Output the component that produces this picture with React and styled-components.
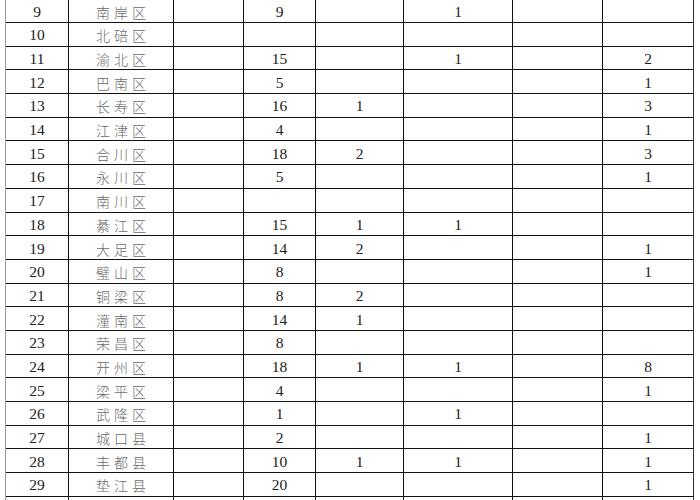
import React from "react";
import styled, { createGlobalStyle } from "styled-components";

const Global = createGlobalStyle`
  html, body { margin: 0; padding: 0; background: #fff; overflow: hidden; }
  body { width: 700px; height: 500px; }
`;

const COLS = [63, 105, 70, 72, 88, 109, 90, 91];

const rows = [
  ["9", "南岸区", "", "9", "", "1", "", ""],
  ["10", "北碚区", "", "", "", "", "", ""],
  ["11", "渝北区", "", "15", "", "1", "", "2"],
  ["12", "巴南区", "", "5", "", "", "", "1"],
  ["13", "长寿区", "", "16", "1", "", "", "3"],
  ["14", "江津区", "", "4", "", "", "", "1"],
  ["15", "合川区", "", "18", "2", "", "", "3"],
  ["16", "永川区", "", "5", "", "", "", "1"],
  ["17", "南川区", "", "", "", "", "", ""],
  ["18", "綦江区", "", "15", "1", "1", "", ""],
  ["19", "大足区", "", "14", "2", "", "", "1"],
  ["20", "璧山区", "", "8", "", "", "", "1"],
  ["21", "铜梁区", "", "8", "2", "", "", ""],
  ["22", "潼南区", "", "14", "1", "", "", ""],
  ["23", "荣昌区", "", "8", "", "", "", ""],
  ["24", "开州区", "", "18", "1", "1", "", "8"],
  ["25", "梁平区", "", "4", "", "", "", "1"],
  ["26", "武隆区", "", "1", "", "1", "", ""],
  ["27", "城口县", "", "2", "", "", "", "1"],
  ["28", "丰都县", "", "10", "1", "1", "", "1"],
  ["29", "垫江县", "", "20", "", "", "", "1"],
  ["", "", "", "", "", "", "", ""],
];

const Page = styled.div`
  padding-left: 5px;
  margin-top: -0.7px;
`;

const Grid = styled.div`
  display: grid;
  grid-template-columns: ${COLS.map((c) => c + "px").join(" ")};
  grid-auto-rows: 23.7px;
  border-left: 1px solid #9a9a9a;
  width: max-content;
`;

const Cell = styled.div`
  box-sizing: border-box;
  border-right: 1px solid ${(p) => (p.$last ? "#333" : "#111")};
  border-bottom: 1px solid #111;
  display: flex;
  align-items: center;
  justify-content: center;
  padding-top: 2px;
  white-space: nowrap;
  font-family: ${(p) =>
    p.$cjk
      ? `"Noto Sans CJK SC", sans-serif`
      : `"Liberation Serif", "Times New Roman", serif`};
  font-size: ${(p) => (p.$cjk ? "14px" : "15.5px")};
  font-weight: ${(p) => (p.$cjk ? 300 : 400)};
  letter-spacing: ${(p) => (p.$cjk ? "4px" : "0")};
  text-indent: ${(p) => (p.$cjk ? "4px" : "0")};
  color: ${(p) => (p.$cjk ? "#6a6a6a" : "#222")};
`;

export default function App() {
  return (
    <>
      <Global />
      <Page>
        <Grid>
          {rows.map((r, i) =>
            r.map((v, j) => (
              <Cell key={i + "-" + j} $cjk={j === 1} $last={j === 7}>
                {v}
              </Cell>
            ))
          )}
        </Grid>
      </Page>
    </>
  );
}
